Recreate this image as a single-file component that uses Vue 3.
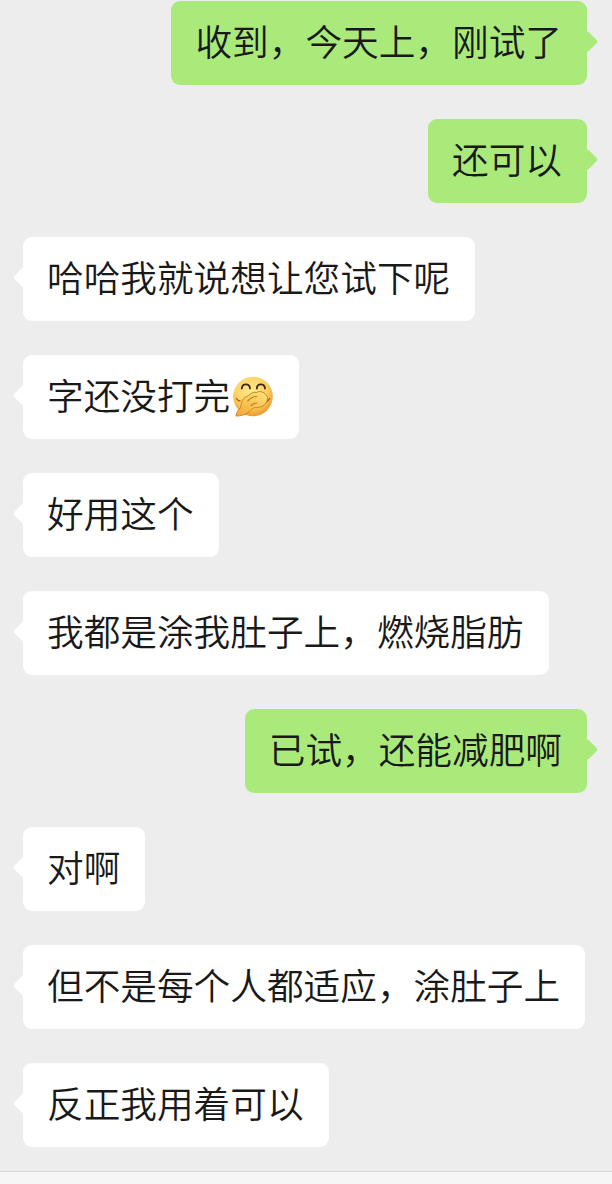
<script setup>
const messages = [
  { side: 'me', text: '收到，今天上，刚试了' },
  { side: 'me', text: '还可以' },
  { side: 'other', text: '哈哈我就说想让您试下呢' },
  { side: 'other', text: '字还没打完', emoji: true },
  { side: 'other', text: '好用这个' },
  { side: 'other', text: '我都是涂我肚子上，燃烧脂肪' },
  { side: 'me', text: '已试，还能减肥啊' },
  { side: 'other', text: '对啊' },
  { side: 'other', text: '但不是每个人都适应，涂肚子上' },
  { side: 'other', text: '反正我用着可以' },
]
</script>

<template>
  <div class="page">
    <div class="list">
      <div v-for="(m, i) in messages" :key="i" class="row" :class="m.side">
        <div class="bubble">
          <span class="text">{{ m.text }}</span>
          <svg v-if="m.emoji" class="emoji" viewBox="0 0 42 42" aria-hidden="true">
            <defs>
              <radialGradient id="face" cx="45%" cy="35%" r="65%">
                <stop offset="0%" stop-color="#fee98f" />
                <stop offset="62%" stop-color="#fcd264" />
                <stop offset="100%" stop-color="#ec9a2c" />
              </radialGradient>
              <linearGradient id="hand" x1="0.8" y1="0.1" x2="0.2" y2="1">
                <stop offset="0%" stop-color="#fddc72" />
                <stop offset="100%" stop-color="#f3ae37" />
              </linearGradient>
            </defs>
            <circle cx="21" cy="20.5" r="19.8" fill="url(#face)" />
            <path d="M9.800 12.500c.4-5.600 7.800-5.600 8.200 0M24.800 12.500c.4-5.600 7.800-5.600 8.200 0" fill="none" stroke="#3f2610" stroke-width="1.800" stroke-linecap="round" />
            <path d="M4.500 22.500c.8 1.500 2 2.300 3.600 2.500M34 26c1.700-.4 2.900-1.700 3.500-3.500" fill="none" stroke="#a8641c" stroke-width="1.300" stroke-linecap="round" />
            <path d="M4 40c.3-3.600 2.300-6.200 4.600-8.500.6-3.500 1-6.700 3.200-9.200 1.400-1.600 3.400-2 4.700-2.800 2.200-2.300 5.500-3.800 8.200-3 1.500-1.300 4.500-1.200 6.500-.1 2.700 1.400 4 3.500 4.400 5.300-.1 3.600-2 6.800-5.200 8.300-2.400 1.400-5.200 1.900-7.800 1.600-2 .7-3.700 2.500-5.300 4-3.100 2.700-8.600 4.700-13.300 4.400z" fill="url(#hand)" stroke="#cf8420" stroke-width="1" stroke-linejoin="round" />
            <path d="M15.800 25c2.600-3 6-4.600 9.200-4.500M19 29.500c1.800-1.400 3.700-2.300 5.800-2.500" fill="none" stroke="#c77d1e" stroke-width="1.200" stroke-linecap="round" />
          </svg>
        </div>
      </div>
    </div>
    <div class="footer"></div>
  </div>
</template>

<style scoped>
.page {
  display: flex;
  flex-direction: column;
  height: 1184px;
  background: #ededed;
  font-family: "Noto Sans CJK SC", "Noto Sans", sans-serif;
  overflow: hidden;
}
.list {
  flex: 1;
  display: flex;
  flex-direction: column;
  gap: 34px;
  padding: 1px 25px 0 23px;
}
.row {
  display: flex;
}
.row.me {
  justify-content: flex-end;
}
.bubble {
  position: relative;
  display: flex;
  align-items: flex-start;
  height: 84px;
  padding: 0 25px 0 24px;
  border-radius: 9px;
  font-size: 36.670px;
  font-weight: 350;
  color: #191919;
  white-space: nowrap;
}
.text {
  line-height: 79px;
}
.bubble::after {
  content: "";
  position: absolute;
  top: 33px;
  width: 15px;
  height: 15px;
  border-radius: 2px;
  background: inherit;
  transform: rotate(45deg);
}
.me .bubble {
  background: #a9ea7a;
}
.me .bubble::after {
  right: -7.500px;
}
.other .bubble {
  background: #ffffff;
}
.other .bubble::after {
  left: -7.500px;
}
.emoji {
  align-self: center;
  width: 42px;
  height: 42px;
  margin-left: 2px;
  flex: none;
}
.footer {
  height: 12px;
  background: #f6f6f6;
  border-top: 1px solid #d9d9d9;
}
</style>
